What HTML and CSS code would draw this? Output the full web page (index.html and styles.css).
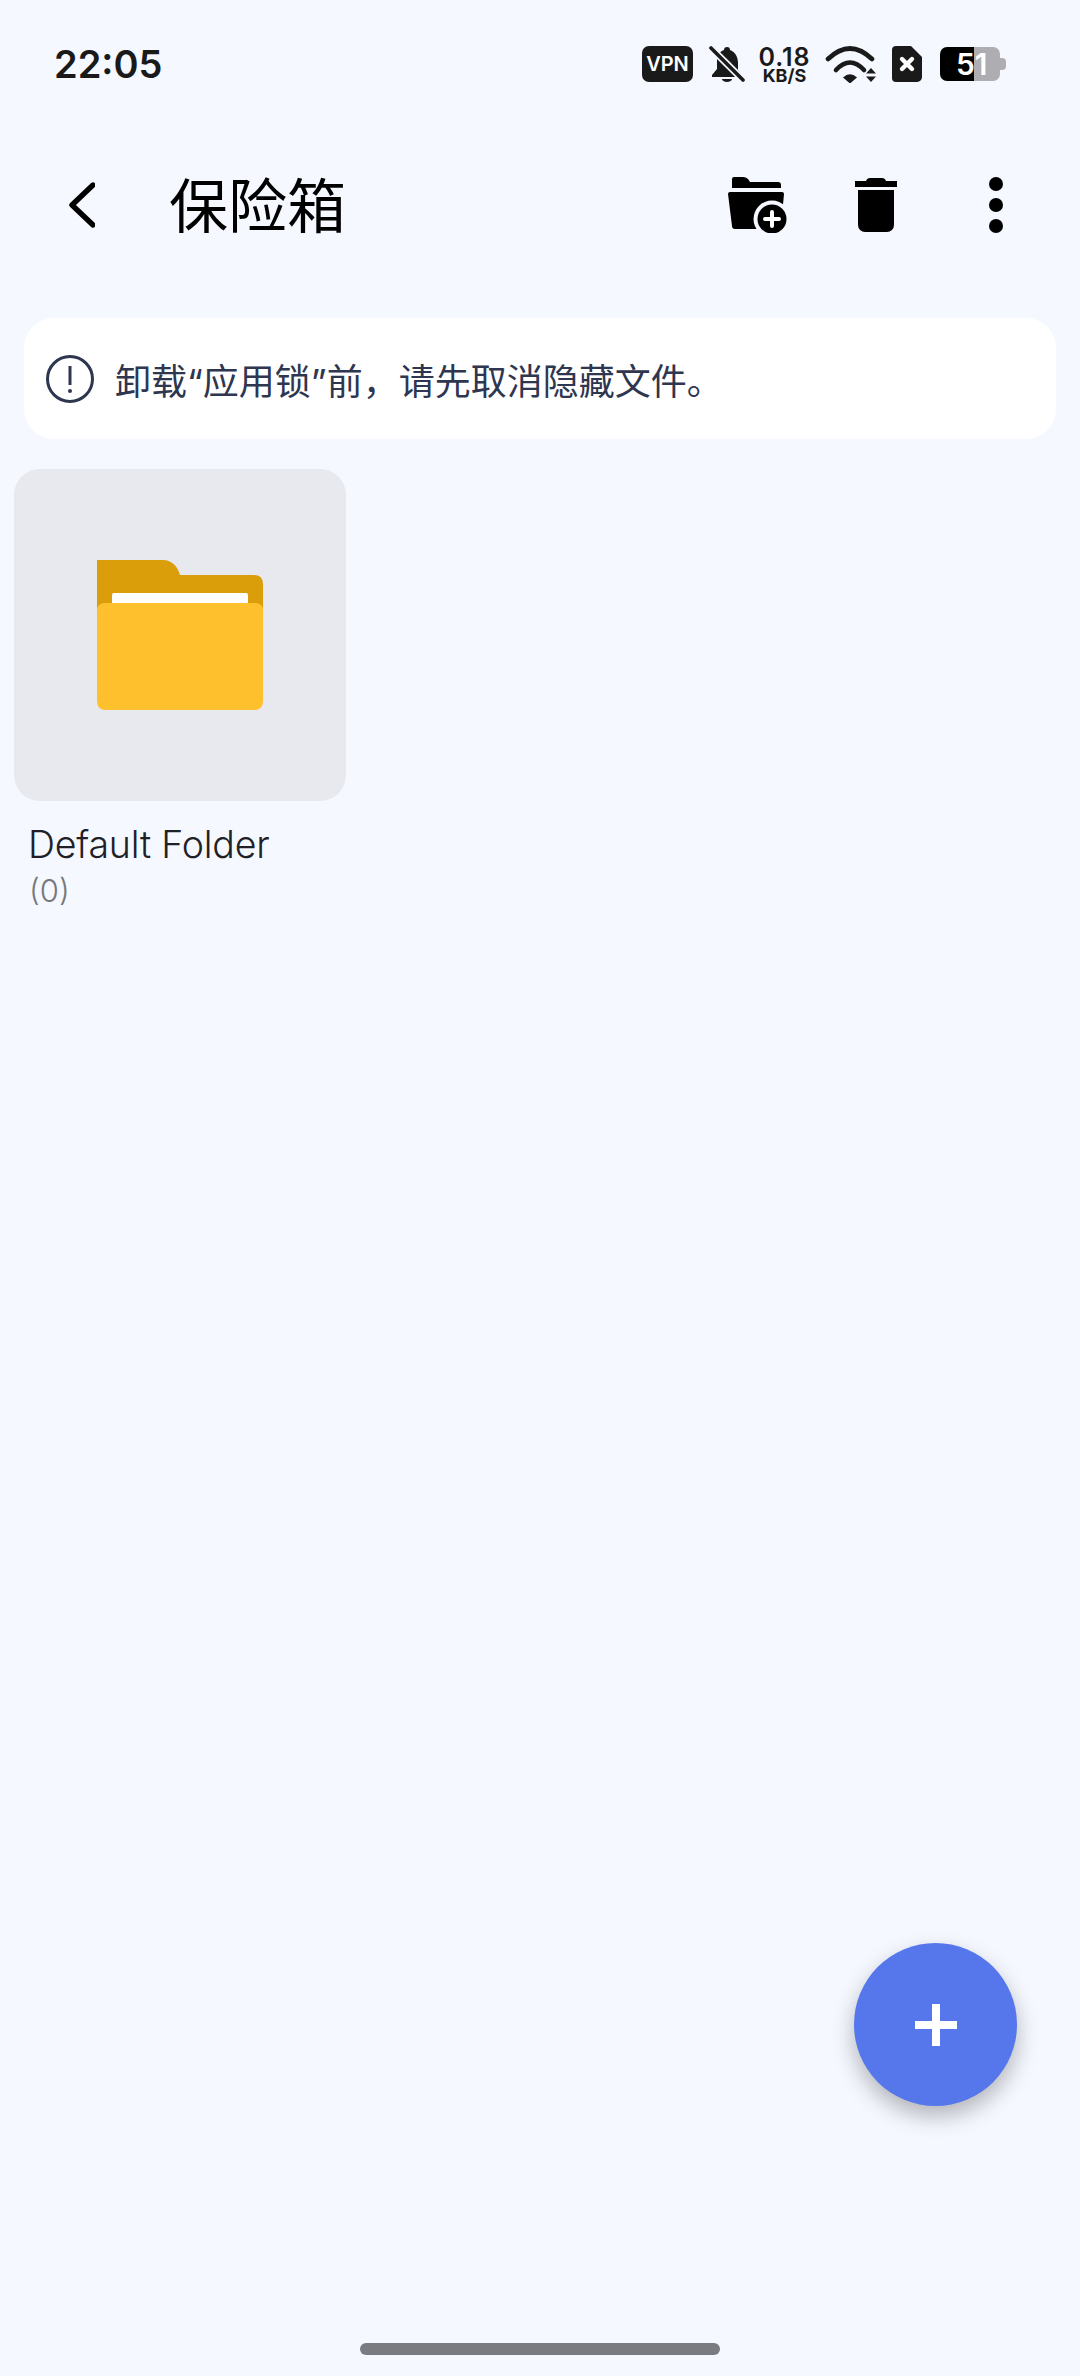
FILE: index.html
```html
<!DOCTYPE html>
<html lang="zh-CN">
<head>
    <meta charset="UTF-8">
    <meta name="viewport" content="width=device-width, initial-scale=1.0">
    <title>保险箱</title>
    <link rel="stylesheet" href="styles.css">
</head>
<body>
    <div class="phone">
        <div class="status-bar">
            <span class="status-time">22:05</span>
            <div class="status-icons">
                <span class="vpn-badge">VPN</span>
                <svg class="icon-bell" viewBox="0 0 38 36">
                    <path fill="#1a1a1a" d="M20 1a3 3 0 0 1 3 3C29 6 31 12 31 17V24L35 29V31H5V29L10 23V15C10 10 12 6 17 4A3 3 0 0 1 20 1Z"/>
                    <path fill="#1a1a1a" d="M15 33H25A5 3 0 0 1 15 33Z"/>
                    <path stroke="#f5f8ff" stroke-width="7" d="M3 1L37 35"/>
                    <path stroke="#1a1a1a" stroke-width="3.6" stroke-linecap="round" d="M4 2L36 34"/>
                </svg>
                <div class="net-speed">
                    <span class="net-value">0.18</span>
                    <span class="net-unit">KB/S</span>
                </div>
                <svg class="icon-wifi" viewBox="0 0 52 37">
                    <g fill="none" stroke="#1a1a1a" stroke-width="4.6" stroke-linecap="round">
                        <path d="M4 13Q26 -8 48 13"/>
                        <path d="M12 24Q26 9 40 24"/>
                    </g>
                    <path fill="#1a1a1a" d="M19 31.5Q26 25 33 31.5L26 37.5Z"/>
                    <path fill="#1a1a1a" d="M42 27.5L47 22L52 27.5ZM42 30.5H52L47 36Z"/>
                </svg>
                <svg class="icon-sim" viewBox="0 0 32 36">
                    <path fill="#1a1a1a" d="M6 0H21L32 11V31A5 5 0 0 1 27 36H6A4 4 0 0 1 2 32V4A4 4 0 0 1 6 0Z"/>
                    <path stroke="#fff" stroke-width="4.4" stroke-linecap="round" d="M12 13L22 23M22 13L12 23"/>
                </svg>
                <div class="battery">
                    <div class="battery-fill"></div>
                    <div class="battery-rest"></div>
                    <div class="battery-nub"></div>
                    <span class="battery-level">51</span>
                </div>
            </div>
        </div>

        <header class="app-bar">
            <svg class="icon-back" viewBox="0 0 26 46">
                <path fill="none" stroke="#000" stroke-width="5.4" stroke-linecap="round" stroke-linejoin="round" d="M24 3L3 23L24 43"/>
            </svg>
            <h1 class="app-title">保险箱</h1>
            <div class="app-actions">
                <svg class="icon-folder-add" viewBox="0 0 59 56">
                    <path d="M6 0H15Q18 0 20 2L22 5H50Q53 5 53 8V11H4V2Q4 0 6 0Z"/>
                    <path d="M2 15H54Q56 15 56 17L53 49Q53 52 50 52H7Q4 52 4 49L0 17Q0 15 2 15Z"/>
                    <circle cx="44" cy="42" r="18.5" fill="#f5f8ff"/>
                    <circle cx="44" cy="42" r="14.5"/>
                    <path stroke="#fff" stroke-width="4" stroke-linecap="round" d="M37 42H51M44 35V49"/>
                </svg>
                <svg class="icon-trash" viewBox="0 0 42 54">
                    <path d="M0 3H11Q12 0 15 0H27Q30 0 31 3H42V9H0Z"/>
                    <path d="M3 12H39V47A7 7 0 0 1 32 54H10A7 7 0 0 1 3 47Z"/>
                </svg>
                <svg class="icon-more" viewBox="0 0 14 56">
                    <circle cx="7" cy="7" r="7"/>
                    <circle cx="7" cy="28" r="7"/>
                    <circle cx="7" cy="49" r="7"/>
                </svg>
            </div>
        </header>

        <main class="content">
            <div class="notice">
                <svg class="icon-info" viewBox="0 0 48 48">
                    <circle cx="24" cy="24" r="22.5" fill="none" stroke="#2e3650" stroke-width="3"/>
                    <path stroke="#2e3650" stroke-width="3" d="M24 11V30"/>
                    <circle cx="24" cy="36" r="2" fill="#2e3650"/>
                </svg>
                <span class="notice-text">卸载“应用锁”前，请先取消隐藏文件。</span>
            </div>

            <div class="folder-item">
                <div class="folder-thumb">
                    <svg class="icon-folder" viewBox="0 0 166 150">
                        <path fill="#d99e0a" d="M0 0H66C75 0 81 7 83 15H157Q166 15 166 24V60H0Z"/>
                        <rect x="15" y="33" width="136" height="20" rx="2" fill="#fff"/>
                        <path fill="#ffc02e" d="M8 43H158Q166 43 166 51V141Q166 150 157 150H9Q0 150 0 141V51Q0 43 8 43Z"/>
                    </svg>
                </div>
                <div class="folder-name">Default Folder</div>
                <div class="folder-count">(0)</div>
            </div>
        </main>

        <div class="home-bar"></div>

        <button class="fab">
            <svg class="icon-plus" viewBox="0 0 42 42">
                <path stroke="#fff" stroke-width="8" d="M0 21H42M21 0V42"/>
            </svg>
        </button>
    </div>
</body>
</html>
```

FILE: styles.css
```css
* {
    box-sizing: border-box;
}

body {
    margin: 0;
    background: #f5f8ff;
    font-family: Inter, "Noto Sans CJK SC", sans-serif;
}

.phone {
    position: relative;
    display: flex;
    flex-direction: column;
    width: 1080px;
    height: 2376px;
    overflow: hidden;
}

/* status bar */
.status-bar {
    display: flex;
    align-items: center;
    justify-content: space-between;
    height: 128px;
    padding: 0 74px 0 54px;
    flex-shrink: 0;
}

.status-time {
    font-size: 38px;
    font-weight: 600;
    color: #1a1a1a;
}

.status-icons {
    display: flex;
    align-items: center;
    gap: 14px;
}

.vpn-badge {
    display: flex;
    align-items: center;
    justify-content: center;
    width: 51px;
    height: 36px;
    background: #1a1a1a;
    border-radius: 7px;
    color: #fff;
    font-size: 20px;
    font-weight: 600;
}

.icon-bell {
    width: 38px;
    height: 36px;
}

.net-speed {
    display: flex;
    flex-direction: column;
    align-items: center;
    width: 51px;
    color: #1a1a1a;
    font-weight: 600;
}

.net-value {
    font-size: 25px;
    line-height: 22px;
    letter-spacing: 1px;
}

.net-unit {
    font-size: 18px;
    font-weight: 700;
    line-height: 15px;
}

.icon-wifi {
    width: 52px;
    height: 37px;
}

.icon-sim {
    width: 32px;
    height: 36px;
}

.battery {
    position: relative;
    display: flex;
    align-items: center;
    justify-content: flex-end;
    width: 70px;
    height: 34px;
}

.battery-fill {
    width: 34px;
    height: 34px;
    background: #000;
    border-radius: 7px 0 0 7px;
}

.battery-rest {
    width: 26px;
    height: 34px;
    background: #aeaeb2;
    border-radius: 0 7px 7px 0;
}

.battery-nub {
    width: 6px;
    height: 12px;
    background: #aeaeb2;
    border-radius: 0 4px 4px 0;
}

.battery-level {
    position: absolute;
    left: 20px;
    top: 0;
    color: #fff;
    font-size: 30px;
    font-weight: 600;
    line-height: 34px;
}

/* app bar */
.app-bar {
    display: flex;
    align-items: center;
    height: 154px;
    padding-left: 69px;
    flex-shrink: 0;
}

.icon-back {
    width: 26px;
    height: 46px;
}

.app-title {
    margin: -5px 0 0 74px;
    font-family: "Noto Sans CJK SC", sans-serif;
    font-size: 59px;
    font-weight: 400;
    line-height: 1;
    color: #000;
}

.app-actions {
    display: flex;
    align-items: center;
    margin-left: auto;
    padding-right: 77px;
    gap: 68px;
}

.icon-folder-add {
    width: 59px;
    height: 56px;
}

.icon-trash {
    width: 42px;
    height: 54px;
}

.icon-more {
    width: 14px;
    height: 56px;
    margin-left: 24px;
}

/* content */
.content {
    flex: 1;
    padding-top: 36px;
}

.notice {
    display: flex;
    align-items: center;
    gap: 21px;
    height: 121px;
    margin: 0 24px;
    padding-left: 22px;
    background: #fff;
    border-radius: 30px;
}

.icon-info {
    width: 48px;
    height: 48px;
}

.notice-text {
    font-size: 36px;
    color: #2e3650;
}

.folder-item {
    width: 332px;
    margin: 30px 0 0 14px;
}

.folder-thumb {
    display: flex;
    align-items: center;
    justify-content: center;
    width: 332px;
    height: 332px;
    background: #e8e9ee;
    border-radius: 26px;
}

.icon-folder {
    width: 166px;
    height: 150px;
}

.folder-name {
    margin: 21px 0 0 14px;
    font-size: 37.5px;
    font-weight: 300;
    letter-spacing: -0.2px;
    line-height: 46px;
    color: #1f2126;
    white-space: nowrap;
}

.folder-count {
    margin: 5px 0 0 15px;
    font-size: 31px;
    font-weight: 300;
    line-height: 36px;
    color: #77787c;
}

.home-bar {
    width: 360px;
    height: 12px;
    margin: 0 auto 21px;
    background: #7a7b80;
    border-radius: 6px;
    flex-shrink: 0;
}

.fab {
    position: absolute;
    left: 854px;
    top: 1943px;
    display: flex;
    align-items: center;
    justify-content: center;
    width: 163px;
    height: 163px;
    padding: 0;
    border: 0;
    border-radius: 50%;
    background: #5677ec;
    box-shadow: 0 10px 22px rgba(0, 0, 0, 0.28);
}

.icon-plus {
    width: 42px;
    height: 42px;
}
```
